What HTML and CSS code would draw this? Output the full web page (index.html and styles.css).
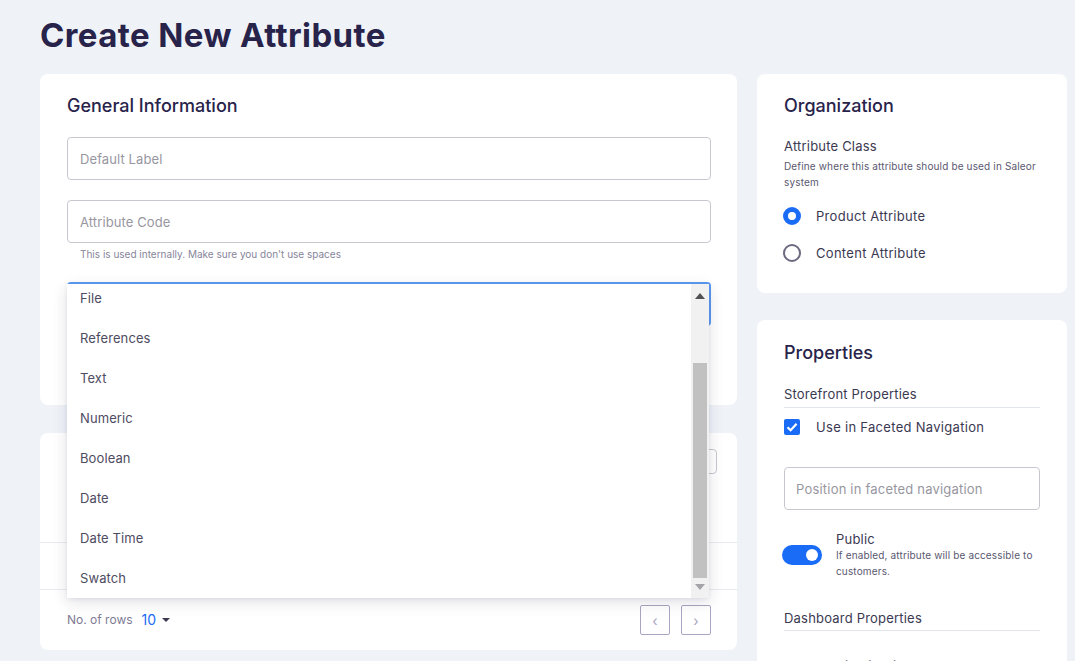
FILE: index.html
```html
<!DOCTYPE html>
<html>
<head>
<meta charset="utf-8">
<link rel="stylesheet" href="styles.css">
</head>
<body>
<div class="page">
  <h1 class="title">Create New Attribute</h1>
  <div class="grid">
    <div class="col">
      <section class="card card-general">
        <h2 class="card-title">General Information</h2>
        <div class="field field-first"><span class="ph">Default Label</span></div>
        <div class="field field-code"><span class="ph">Attribute Code</span></div>
        <div class="helper">This is used internally. Make sure you don't use spaces</div>
        <div class="select-wrap">
          <div class="field field-focus"></div>
          <div class="dropdown">
            <ul class="options">
              <li>File</li>
              <li>References</li>
              <li>Text</li>
              <li>Numeric</li>
              <li>Boolean</li>
              <li>Date</li>
              <li>Date Time</li>
              <li>Swatch</li>
            </ul>
            <div class="scrollbar">
              <span class="arrow arrow-up"></span>
              <span class="thumb"></span>
              <span class="arrow arrow-down"></span>
            </div>
          </div>
        </div>
      </section>
      <section class="card card-values">
        <div class="values-head">
          <span class="mini-btn"></span>
        </div>
        <div class="values-row"></div>
        <div class="values-foot">
          <div class="rows">No. of rows <span class="rows-num">10</span><span class="caret"></span></div>
          <div class="pager">
            <span class="pg">&#8249;</span>
            <span class="pg">&#8250;</span>
          </div>
        </div>
      </section>
    </div>
    <div class="col">
      <section class="card card-side card-org">
        <h2 class="card-title">Organization</h2>
        <div class="sub">Attribute Class</div>
        <div class="desc desc-org">Define where this attribute should be used in Saleor system</div>
        <div class="radios">
          <label class="radio-row"><span class="radio on"></span>Product Attribute</label>
          <label class="radio-row"><span class="radio"></span>Content Attribute</label>
        </div>
      </section>
      <section class="card card-side card-props">
        <h2 class="card-title">Properties</h2>
        <div class="sub sub-line">Storefront Properties</div>
        <label class="check-row"><span class="checkbox"><svg viewBox="0 0 16 16" width="16" height="16"><path d="M3.5 8.2 6.6 11.2 12.6 4.8" fill="none" stroke="#fff" stroke-width="2.2"/></svg></span>Use in Faceted Navigation</label>
        <div class="field field-small"><span class="ph">Position in faceted navigation</span></div>
        <div class="switch-row">
          <span class="switch"><span class="knob"></span></span>
          <div>
            <div class="switch-label">Public</div>
            <div class="desc">If enabled, attribute will be accessible to customers.</div>
          </div>
        </div>
        <div class="sub sub-line sub-dash">Dashboard Properties</div>
        <label class="check-row check-row-2"><span class="checkbox"></span>Use in Filtering</label>
      </section>
    </div>
  </div>
</div>
</body>
</html>
```

FILE: styles.css
```css
* { box-sizing: border-box; }
html, body { margin: 0; padding: 0; }
body {
  background: #eff3f8;
  font-family: Inter, "Noto Sans", sans-serif;
  color: #28234a;
  overflow: hidden;
  height: 661px;
}
.page { padding: 0 8px 0 40px; }
.title {
  margin: 0;
  padding-top: 15px;
  height: 74px;
  font-size: 33px;
  font-weight: 700;
  line-height: 40px;
  color: #28234a;
  letter-spacing: 0.4px;
}
.grid {
  display: grid;
  grid-template-columns: 697px 310px;
  column-gap: 20px;
  align-items: start;
}
.col { display: flex; flex-direction: column; }
.card {
  background: #fff;
  border-radius: 8px;
  padding: 0 26px 0 27px;
}
.card-side { padding-right: 27px; }
.card-title {
  margin: 0;
  font-size: 18px;
  font-weight: 500;
  line-height: 24px;
  color: #28234a;
}
.card-general { height: 331px; padding-top: 20px; position: relative; }
.field {
  height: 43px;
  border: 1px solid #c9c8d0;
  border-radius: 4px;
  display: flex;
  align-items: center;
  padding: 0 12px;
  margin-top: 20px;
}
.field-first { margin-top: 19px; }
.ph { font-size: 13px; color: #97969f; letter-spacing: 0.1px; }
.helper {
  font-size: 10px;
  color: #87859a;
  padding: 5px 0 0 13px;
  line-height: 12px;
}
.select-wrap { position: relative; margin-top: 22px; }
.field-focus {
  margin-top: 0;
  height: 44px;
  border: 2px solid #5b9bf3;
}
.dropdown {
  position: absolute;
  z-index: 5;
  top: 2px;
  left: 0;
  width: 642px;
  height: 314px;
  background: #fff;
  box-shadow: 0 4px 14px rgba(40, 35, 74, 0.14), 0 1px 4px rgba(40, 35, 74, 0.08);
  display: flex;
  overflow: hidden;
}
.options {
  list-style: none;
  margin: 0;
  padding: 0;
  flex: 1;
  margin-top: -6px;
}
.options li {
  height: 40px;
  line-height: 40px;
  padding-left: 13px;
  font-size: 13px;
  color: #4e4c62;
  letter-spacing: 0.1px;
}
.scrollbar {
  width: 18px;
  background: #f1f1f1;
  display: flex;
  flex-direction: column;
  align-items: center;
}
.arrow { width: 0; height: 0; border-left: 5px solid transparent; border-right: 5px solid transparent; }
.arrow-up { border-bottom: 6px solid #505055; margin-top: 9px; }
.thumb { width: 14px; height: 215px; background: #c1c1c1; margin-top: 64px; }
.arrow-down { border-top: 6px solid #a3a3a8; margin-top: 6px; }

.card-values { margin-top: 28px; height: 217px; padding: 0; }
.values-head {
  height: 109px;
  display: flex;
  justify-content: flex-end;
  align-items: flex-start;
  padding: 16px 20px 0 27px;
}
.mini-btn { width: 60px; height: 25px; border: 1px solid #c9c8d0; border-radius: 4px; }
.values-row { height: 48px; border-top: 1px solid #e8ecf1; border-bottom: 1px solid #e8ecf1; }
.values-foot {
  display: flex;
  justify-content: space-between;
  align-items: center;
  padding: 15px 26px 0 27px;
}
.rows { font-size: 12px; color: #7e7b95; display: flex; align-items: center; margin-top: -2px; }
.rows-num { color: #1a6cf6; font-size: 14px; margin-left: 9px; }
.caret {
  width: 0; height: 0;
  border-left: 4px solid transparent; border-right: 4px solid transparent;
  border-top: 4px solid #3b3951;
  margin-left: 6px; margin-top: 2px;
}
.pager { display: flex; gap: 11px; }
.pg {
  width: 30px; height: 30px;
  border: 1px solid #a9a5c0;
  border-radius: 2px;
  display: flex; align-items: center; justify-content: center;
  color: #a9a5c0; font-size: 14px;
}

.card-org { height: 219px; padding-top: 20px; }
.sub { font-size: 13px; color: #3b3951; margin-top: 19px; line-height: 18px; letter-spacing: 0.2px; }
.desc { font-size: 10px; color: #5a5870; line-height: 16px; margin-top: 0; letter-spacing: 0.15px; }
.desc-org { margin-top: 3px; }
.radios { margin-top: 17px; display: flex; flex-direction: column; gap: 19px; }
.radio-row { display: flex; align-items: center; font-size: 13px; color: #3b3951; letter-spacing: 0.3px; height: 18px; }
.radio {
  width: 18px; height: 18px; border-radius: 50%;
  border: 2px solid #6e6a80; margin-left: -1px; margin-right: 15px; flex: none;
}
.radio.on { border: 5px solid #1a6cf6; background: #fff; }

.card-props { margin-top: 27px; height: 400px; padding-top: 21px; }
.sub-line { padding-bottom: 4px; border-bottom: 1px solid #e1e4ea; margin-top: 20px; }
.check-row { display: flex; align-items: center; font-size: 13px; color: #3b3951; letter-spacing: 0.3px; margin-top: 10px; height: 18px; }
.checkbox {
  width: 16px; height: 16px; border-radius: 2px; background: #1a6cf6;
  margin-right: 16px; display: flex; flex: none;
}
.field-small { margin-top: 31px; padding: 0 11px; }
.field-small .ph { letter-spacing: 0.2px; }
.switch-row { display: flex; align-items: flex-start; margin-top: 21px; }
.switch {
  width: 40px; height: 20px; border-radius: 10px; background: #1a6cf6;
  margin: 14px 14px 0 -2px; flex: none; position: relative;
}
.knob { position: absolute; width: 12px; height: 12px; border-radius: 50%; background: #fff; top: 4px; right: 4px; }
.switch-label { font-size: 13px; color: #3b3951; line-height: 16px; letter-spacing: 0.2px; }
.sub-dash { margin-top: 30px; padding-bottom: 3px; }
.check-row-2 { margin-top: 26px; padding-left: 32px; }
.check-row-2 .checkbox { display: none; }
```
